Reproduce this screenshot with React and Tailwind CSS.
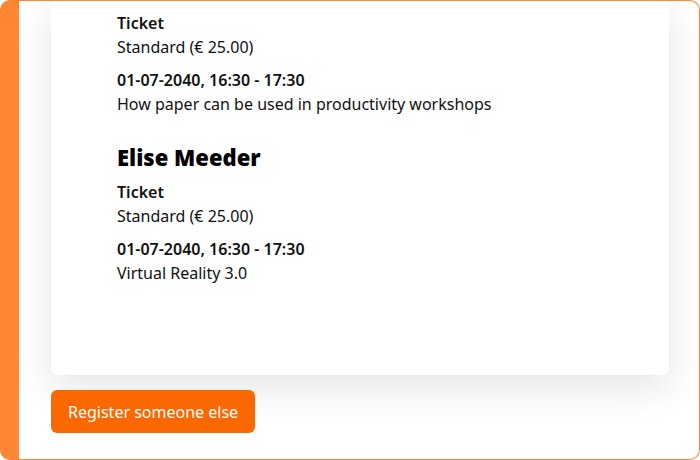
export default function App() {
  const attendees = [
    { name: null, ticket: "Standard (€ 25.00)", time: "01-07-2040, 16:30 - 17:30", session: "How paper can be used in productivity workshops" },
    { name: "Elise Meeder", ticket: "Standard (€ 25.00)", time: "01-07-2040, 16:30 - 17:30", session: "Virtual Reality 3.0" },
  ];

  return (
    <div
      className="h-[460px] w-[700px] overflow-hidden rounded-[10px] border border-l-[19px] border-[#ff8633] bg-white text-[#111]"
      style={{ fontFamily: '"Noto Sans", "Open Sans", sans-serif' }}
    >
      <div className="pl-[32px] pr-[30px]">
        <div className="rounded-b-md bg-white pl-[66px] pt-[10px] pb-[90px] shadow-[0_12px_40px_rgba(0,0,0,0.11)]">
          {attendees.map((a, i) => (
            <div key={i} className={i > 0 ? "mt-[26px]" : ""}>
              {a.name && <h2 className="mb-[8px] text-[22px] font-black leading-[30px] text-black">{a.name}</h2>}
              <div className="text-[16px] font-semibold leading-[24px]">Ticket</div>
              <div className="text-[16px] leading-[24px]">{a.ticket}</div>
              <div className="mt-[9px] text-[16px] font-semibold leading-[24px]">{a.time}</div>
              <div className="text-[16px] leading-[24px]">{a.session}</div>
            </div>
          ))}
        </div>
        <button className="mt-[15px] h-[43px] rounded-md bg-[#fb6700] px-[17px] text-[16px] text-white">
          Register someone else
        </button>
      </div>
    </div>
  );
}
